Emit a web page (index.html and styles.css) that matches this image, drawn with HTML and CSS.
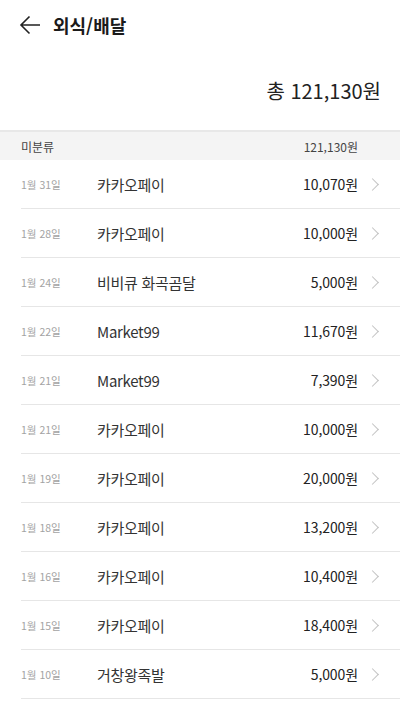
FILE: index.html
```html
<!DOCTYPE html>
<html lang="ko">
<head>
  <meta charset="UTF-8">
  <meta name="viewport" content="width=device-width, initial-scale=1.0">
  <title>외식/배달</title>
  <link rel="stylesheet" href="styles.css">
</head>
<body>
  <header class="top-bar">
    <svg class="back-icon" width="22" height="20" viewBox="0 0 22 20">
      <path d="M21 10H2M10.5 1.5L2 10l8.5 8.5" fill="none" stroke="#222" stroke-width="1.6"/>
    </svg>
    <h1>외식/배달</h1>
  </header>

  <div class="total">총 121,130원</div>

  <div class="group-head">
    <span>미분류</span>
    <span>121,130원</span>
  </div>

  <ul class="list">
    <li class="row"><span class="date">1월 31일</span><span class="name">카카오페이</span><span class="amount">10,070원</span><span class="chev"></span></li>
    <li class="row"><span class="date">1월 28일</span><span class="name">카카오페이</span><span class="amount">10,000원</span><span class="chev"></span></li>
    <li class="row"><span class="date">1월 24일</span><span class="name">비비큐 화곡곰달</span><span class="amount">5,000원</span><span class="chev"></span></li>
    <li class="row"><span class="date">1월 22일</span><span class="name">Market99</span><span class="amount">11,670원</span><span class="chev"></span></li>
    <li class="row"><span class="date">1월 21일</span><span class="name">Market99</span><span class="amount">7,390원</span><span class="chev"></span></li>
    <li class="row"><span class="date">1월 21일</span><span class="name">카카오페이</span><span class="amount">10,000원</span><span class="chev"></span></li>
    <li class="row"><span class="date">1월 19일</span><span class="name">카카오페이</span><span class="amount">20,000원</span><span class="chev"></span></li>
    <li class="row"><span class="date">1월 18일</span><span class="name">카카오페이</span><span class="amount">13,200원</span><span class="chev"></span></li>
    <li class="row"><span class="date">1월 16일</span><span class="name">카카오페이</span><span class="amount">10,400원</span><span class="chev"></span></li>
    <li class="row"><span class="date">1월 15일</span><span class="name">카카오페이</span><span class="amount">18,400원</span><span class="chev"></span></li>
    <li class="row"><span class="date">1월 10일</span><span class="name">거창왕족발</span><span class="amount">5,000원</span><span class="chev"></span></li>
  </ul>
</body>
</html>
```

FILE: styles.css
```css
/* General */
body {
  margin: 0;
  background: #fff;
  color: #222;
  font-family: "Noto Sans CJK KR", "Noto Sans", sans-serif;
}

/* Top bar */
.top-bar {
  height: 50px;
  display: flex;
  align-items: center;
  padding-left: 19px;
}

.back-icon {
  margin-right: 12px;
}

.top-bar h1 {
  margin: 0;
  font-size: 18px;
  font-weight: 700;
  color: #1a1a1a;
}

/* Total */
.total {
  height: 80px;
  display: flex;
  align-items: center;
  justify-content: flex-end;
  padding-right: 19px;
  font-size: 20px;
  font-weight: 400;
  color: #222;
}

/* Group header */
.group-head {
  height: 28px;
  border-top: 2px solid #e8e8e8;
  background: #f4f4f4;
  display: flex;
  align-items: center;
  justify-content: space-between;
  padding: 0 42px 0 21px;
  font-size: 12px;
  color: #444;
}

/* List */
.list {
  list-style: none;
  margin: 0;
  padding: 0 0 0 21px;
}

.row {
  height: 48px;
  border-bottom: 1px solid #e6e6e6;
  display: flex;
  align-items: center;
}

.date {
  width: 76px;
  font-size: 10.5px;
  color: #a3a3a3;
}

.name {
  flex: 1;
  font-size: 15px;
  letter-spacing: -0.3px;
  color: #333;
}

.amount {
  font-size: 14px;
  letter-spacing: -0.1px;
  color: #222;
}

.chev {
  width: 8px;
  height: 8px;
  border-top: 1.2px solid #c2c2c2;
  border-right: 1.2px solid #c2c2c2;
  transform: rotate(45deg);
  margin: 0 23px 0 10px;
}
```
